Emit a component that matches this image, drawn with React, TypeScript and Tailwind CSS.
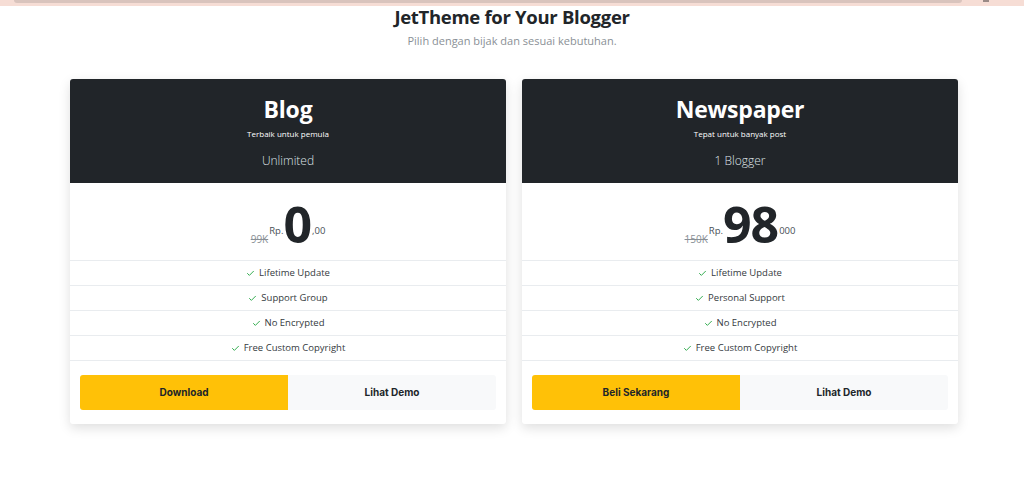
import { Check } from "lucide-react";

const plans = [
  {
    name: "Blog",
    tagline: "Terbaik untuk pemula",
    limit: "Unlimited",
    oldPrice: "99K",
    price: "0",
    suffix: ",00",
    features: ["Lifetime Update", "Support Group", "No Encrypted", "Free Custom Copyright"],
    primary: "Download",
  },
  {
    name: "Newspaper",
    tagline: "Tepat untuk banyak post",
    limit: "1 Blogger",
    oldPrice: "150K",
    price: "98",
    suffix: "000",
    features: ["Lifetime Update", "Personal Support", "No Encrypted", "Free Custom Copyright"],
    primary: "Beli Sekarang",
  },
];

const App = () => {
  return (
    <div className="min-h-[495px] bg-white font-['Open_Sans',sans-serif] text-[#212529]">
      {/* browser strip */}
      <div className="h-[6px] bg-[#f6ddd5] relative">
        <div className="absolute left-[14px] right-[62px] top-0 h-[3px] rounded-b-full bg-[#d9c4bd]" />
        <div className="absolute left-[983px] top-0 h-[2px] w-[6px] bg-[#9a8a86]" />
      </div>

      <div className="text-center pt-[2px]">
        <h1 className="text-[18.5px] font-bold leading-[18px] tracking-[-0.3px]">JetTheme for Your Blogger</h1>
        <p className="mt-[8px] text-[11px] leading-[14px] text-[#8a9096]">Pilih dengan bijak dan sesuai kebutuhan.</p>
      </div>

      <div className="mt-[31px] mx-auto w-[892px] pl-[4px] grid grid-cols-[436px_436px] gap-[16px]">
        {plans.map((plan) => (
          <div key={plan.name} className="bg-white rounded-[3px] shadow-[0_4px_12px_rgba(0,0,0,0.13)] overflow-hidden">
            <div className="bg-[#212529] h-[104px] text-center pt-[15px]">
              <div className="text-[23px] font-bold leading-[30px] text-white tracking-[-0.2px]">{plan.name}</div>
              <div className="text-[8px] leading-[12px] text-white mt-[4px]">{plan.tagline}</div>
              <div className="text-[12px] font-light leading-[16px] text-[#dee2e6] mt-[13px]">{plan.limit}</div>
            </div>

            <div className="h-[77px] flex items-center justify-center pt-[4px]">
              <span className="text-[10px] text-[#8a9096] line-through self-end mb-[13px] mr-[1px]">{plan.oldPrice}</span>
              <span className="text-[9.5px] text-[#495057] self-start mt-[37px]">Rp.</span>
              <span className="text-[50px] font-bold leading-[50px] tracking-[-1px]">{plan.price}</span>
              <span className="text-[9.5px] text-[#495057] self-start mt-[37px] ml-[1px]">{plan.suffix}</span>
            </div>

            <ul>
              {plan.features.map((f) => (
                <li
                  key={f}
                  className="h-[25px] border-t border-[#e9ecef] flex items-center justify-center gap-[4px] text-[9.5px] text-[#343a40]"
                >
                  <Check className="w-[9px] h-[9px] text-[#28a745]" strokeWidth={2.5} />
                  {f}
                </li>
              ))}
            </ul>

            <div className="border-t border-[#e9ecef] px-[10px] pt-[14px] pb-[14px] grid grid-cols-2">
              <button className="h-[35px] bg-[#ffc107] rounded-l-[3px] text-[10px] font-bold font-['Inter',sans-serif] text-[#212529]">
                {plan.primary}
              </button>
              <button className="h-[35px] bg-[#f8f9fa] rounded-r-[3px] text-[10px] font-bold font-['Inter',sans-serif] text-[#212529]">
                Lihat Demo
              </button>
            </div>
          </div>
        ))}
      </div>
    </div>
  );
};

export default App;
